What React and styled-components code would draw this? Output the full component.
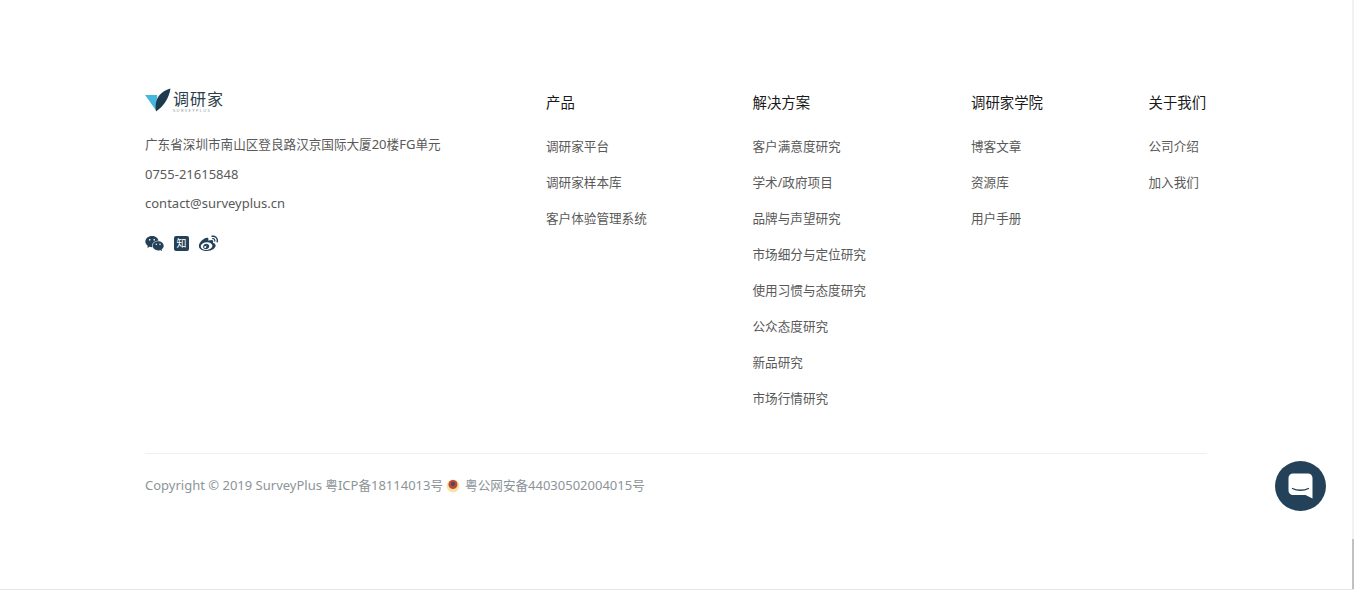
import React from "react";
import styled, { createGlobalStyle } from "styled-components";
import { AiFillWechat } from "react-icons/ai";
import { RiWeiboFill } from "react-icons/ri";

const Global = createGlobalStyle`
  html, body {
    margin: 0;
    padding: 0;
    background: #fff;
    overflow: hidden;
  }
  body {
    font-family: "Noto Sans", "Noto Sans CJK SC", sans-serif;
  }
`;

const Page = styled.div`
  position: relative;
  height: 590px;
  box-sizing: border-box;
  border-bottom: 1px solid #e8e4e0;
  padding: 88px 147px 0 145px;
`;

const Scrollbar = styled.div`
  position: absolute;
  top: 0;
  right: 0;
  width: 2px;
  height: 589px;
  background: #f1f1f1;
  &::after {
    content: "";
    position: absolute;
    left: 0;
    right: 0;
    bottom: 0;
    height: 50px;
    background: #c1c1c1;
  }
`;

const Columns = styled.div`
  display: flex;
  height: 365px;
`;

const Info = styled.div`
  width: 401px;
`;

const Logo = styled.div`
  display: flex;
  align-items: flex-start;
  height: 24px;
`;

const LogoText = styled.div`
  margin-left: 2px;
  margin-top: 3px;
  width: 50px;
  color: #2c3e4a;
  font-size: 16px;
  line-height: 16px;
  letter-spacing: 1px;
  white-space: nowrap;
  small {
    display: block;
    margin-top: 2px;
    font-size: 4px;
    line-height: 3px;
    letter-spacing: 1.4px;
    color: #8a98a2;
  }
`;

const InfoLine = styled.div`
  color: #595959;
  font-size: 12.6px;
  line-height: 29.5px;
  white-space: nowrap;
`;

const Latin = styled.span`
  font-size: 13px;
`;

const InfoList = styled.div`
  margin-top: 18px;
`;

const Socials = styled.div`
  display: flex;
  align-items: center;
  gap: 9px;
  margin: 14px 0 0 -1px;
  color: #234259;
`;

const Column = styled.div`
  width: ${(p) => p.$width}px;
`;

const Heading = styled.div`
  color: #1a1a1a;
  font-size: 14.4px;
  line-height: 20px;
  margin: 5px 0 16px;
  white-space: nowrap;
`;

const LinkItem = styled.a`
  display: block;
  color: #595959;
  font-size: 12.6px;
  line-height: 36px;
  white-space: nowrap;
`;

const Bottom = styled.div`
  border-top: 1px solid #f0f0f0;
  padding-top: 21px;
  display: flex;
  align-items: center;
  color: #8c9499;
  font-size: 12.6px;
  line-height: 20px;
  white-space: pre;
`;

const Badge = styled.svg`
  margin: 0 5px 0 3px;
`;

const ChatButton = styled.div`
  position: absolute;
  left: 1275px;
  top: 461px;
  width: 51px;
  height: 50px;
  border-radius: 50%;
  background: #234259;
  display: flex;
  align-items: center;
  justify-content: center;
`;

const ZhihuBox = styled.div`
  width: 15px;
  height: 15px;
  border-radius: 2px;
  background: #234259;
  color: #fff;
  font-size: 10px;
  line-height: 15px;
  text-align: center;
`;

const columns = [
  { title: "产品", width: 206.5, links: ["调研家平台", "调研家样本库", "客户体验管理系统"] },
  {
    title: "解决方案",
    width: 218.5,
    links: [
      "客户满意度研究",
      "学术/政府项目",
      "品牌与声望研究",
      "市场细分与定位研究",
      "使用习惯与态度研究",
      "公众态度研究",
      "新品研究",
      "市场行情研究",
    ],
  },
  { title: "调研家学院", width: 177.5, links: ["博客文章", "资源库", "用户手册"] },
  { title: "关于我们", width: 58, links: ["公司介绍", "加入我们"] },
];

function LogoMark() {
  return (
    <svg width="26" height="24" viewBox="0 0 26 24">
      <path d="M0 7 L12 7 C12.500 8 12.300 9 12 10.500 C11 14 11.500 18 11.500 23 C8 18 4 12.500 0 7Z" fill="#45b6de" />
      <path d="M25.500 0.500 C24 10 19 18 11 23.500 C9.500 14 12 4.500 25.500 0.500Z" fill="#1d3a4f" />
    </svg>
  );
}

function PoliceBadge() {
  return (
    <Badge width="14" height="15" viewBox="0 0 14 15">
      <circle cx="7" cy="8" r="6.500" fill="#f5e3a8" />
      <circle cx="7" cy="6.500" r="4.500" fill="#c2492f" />
      <circle cx="7" cy="6" r="2.200" fill="#4a4a6b" />
    </Badge>
  );
}

function ChatIcon() {
  return (
    <svg width="25" height="26" viewBox="0 0 25 26">
      <path d="M5 .5h15a4.500 4.500 0 0 1 4.500 4.500v20.500l-7-3.500H5a4.500 4.500 0 0 1-4.500-4.500V5A4.500 4.500 0 0 1 5 .5z" fill="#fff" />
      <path d="M4.500 15.500c4.500 2.400 11.500 2.400 16 0" fill="none" stroke="#234259" strokeWidth="1.400" strokeLinecap="round" />
    </svg>
  );
}

export default function App() {
  return (
    <>
      <Global />
      <Page>
        <Columns>
          <Info>
            <Logo>
              <LogoMark />
              <LogoText>
                调研家
                <small>SURVEYPLUS</small>
              </LogoText>
            </Logo>
            <InfoList>
              <InfoLine>
                广东省深圳市南山区登良路汉京国际大厦<Latin>20</Latin>楼<Latin>FG</Latin>单元
              </InfoLine>
              <InfoLine>
                <Latin>0755-21615848</Latin>
              </InfoLine>
              <InfoLine>
                <Latin>contact@surveyplus.cn</Latin>
              </InfoLine>
            </InfoList>
            <Socials>
              <AiFillWechat size={21} />
              <ZhihuBox>知</ZhihuBox>
              <RiWeiboFill size={21} />
            </Socials>
          </Info>
          {columns.map((col) => (
            <Column key={col.title} $width={col.width}>
              <Heading>{col.title}</Heading>
              {col.links.map((link) => (
                <LinkItem key={link}>{link}</LinkItem>
              ))}
            </Column>
          ))}
        </Columns>
        <Bottom>
          <span>
            <Latin>Copyright © 2019 SurveyPlus </Latin>粤<Latin>ICP</Latin>备<Latin>18114013</Latin>号
          </span>
          <PoliceBadge />
          <span>
            粤公网安备<Latin>44030502004015</Latin>号
          </span>
        </Bottom>
        <ChatButton>
          <ChatIcon />
        </ChatButton>
        <Scrollbar />
      </Page>
    </>
  );
}
